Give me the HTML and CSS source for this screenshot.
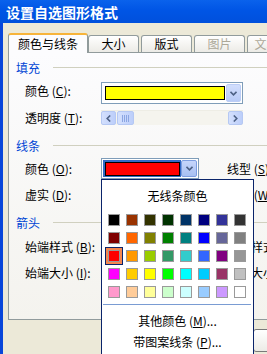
FILE: index.html
```html
<!DOCTYPE html>
<html lang="zh-CN">
<head>
    <meta charset="UTF-8">
    <title>设置自选图形格式</title>
    <link rel="stylesheet" href="styles.css">
</head>
<body>
    <div class="window">
        <div class="titlebar">设置自选图形格式</div>
        <div class="frame">
            <div class="tabs">
                <div class="tab active">颜色与线条</div>
                <div class="tab">大小</div>
                <div class="tab">版式</div>
                <div class="tab disabled">图片</div>
                <div class="tab disabled">文本框</div>
            </div>
            <div class="pane">
                <div class="section">填充</div>
                <div class="row row-fill">
                    <span class="label">颜色 (<u>C</u>):</span>
                    <div class="combo wide">
                        <span class="field"><span class="chip yellow"></span></span>
                        <span class="drop"><svg width="7" height="5" viewBox="0 0 7 5"><polyline points="0.5,0.8 3.5,3.8 6.5,0.8" fill="none" stroke="#4d6185" stroke-width="1.6"/></svg></span>
                    </div>
                </div>
                <div class="row row-alpha">
                    <span class="label">透明度 (<u>T</u>):</span>
                    <div class="scroll">
                        <span class="sbtn"><svg width="5" height="7" viewBox="0 0 5 7"><polyline points="4.2,0.5 1.2,3.5 4.2,6.5" fill="none" stroke="#4d6185" stroke-width="1.6"/></svg></span>
                        <span class="thumb"><i></i><i></i><i></i><i></i></span>
                        <span class="track"></span>
                        <span class="sbtn"><svg width="5" height="7" viewBox="0 0 5 7"><polyline points="0.8,0.5 3.8,3.5 0.8,6.5" fill="none" stroke="#4d6185" stroke-width="1.6"/></svg></span>
                    </div>
                </div>

                <div class="section section-line">线条</div>
                <div class="row grid-row row-color">
                    <span class="label">颜色 (<u>O</u>):</span>
                    <div class="combo narrow focused">
                        <span class="field"><span class="chip red"></span></span>
                        <span class="drop hot"><svg width="7" height="5" viewBox="0 0 7 5"><polyline points="0.5,0.8 3.5,3.8 6.5,0.8" fill="none" stroke="#4d6185" stroke-width="1.6"/></svg></span>
                    </div>
                    <span class="label-right">线型 (<u>S</u>):</span>
                </div>
                <div class="row grid-row row-dash">
                    <span class="label">虚实 (<u>D</u>):</span>
                    <span></span>
                    <span class="label-right">粗细 (<u>W</u>):</span>
                </div>

                <div class="section section-arrow">箭头</div>
                <div class="row grid-row row-begin">
                    <span class="label">始端样式 (<u>B</u>):</span>
                    <span></span>
                    <span class="label-right">末端样式 (<u>E</u>):</span>
                </div>
                <div class="row grid-row row-size">
                    <span class="label">始端大小 (<u>I</u>):</span>
                    <span></span>
                    <span class="label-right">末端大小 (<u>Z</u>):</span>
                </div>
            </div>
            <div class="buttons">
                <button class="btn">确定</button>
                <button class="btn">取消</button>
            </div>
        </div>

        <!-- colour dropdown opened over the line colour combo -->
        <div class="popup">
            <div class="popup-title">无线条颜色</div>
            <div class="palette">
                <span class="swatch" style="background:#000000"></span>
                <span class="swatch" style="background:#993300"></span>
                <span class="swatch" style="background:#333300"></span>
                <span class="swatch" style="background:#003300"></span>
                <span class="swatch" style="background:#003366"></span>
                <span class="swatch" style="background:#000080"></span>
                <span class="swatch" style="background:#333399"></span>
                <span class="swatch" style="background:#333333"></span>

                <span class="swatch" style="background:#800000"></span>
                <span class="swatch" style="background:#ff6600"></span>
                <span class="swatch" style="background:#808000"></span>
                <span class="swatch" style="background:#008000"></span>
                <span class="swatch" style="background:#008080"></span>
                <span class="swatch" style="background:#0000ff"></span>
                <span class="swatch" style="background:#666699"></span>
                <span class="swatch" style="background:#808080"></span>

                <span class="swatch selected" style="background:#ff0000"></span>
                <span class="swatch" style="background:#ff9900"></span>
                <span class="swatch" style="background:#99cc00"></span>
                <span class="swatch" style="background:#339966"></span>
                <span class="swatch" style="background:#33cccc"></span>
                <span class="swatch" style="background:#3366ff"></span>
                <span class="swatch" style="background:#800080"></span>
                <span class="swatch" style="background:#969696"></span>

                <span class="swatch" style="background:#ff00ff"></span>
                <span class="swatch" style="background:#ffcc00"></span>
                <span class="swatch" style="background:#ffff00"></span>
                <span class="swatch" style="background:#00ff00"></span>
                <span class="swatch" style="background:#00ffff"></span>
                <span class="swatch" style="background:#00ccff"></span>
                <span class="swatch" style="background:#993366"></span>
                <span class="swatch" style="background:#c0c0c0"></span>

                <span class="swatch" style="background:#ff99cc"></span>
                <span class="swatch" style="background:#ffcc99"></span>
                <span class="swatch" style="background:#ffff99"></span>
                <span class="swatch" style="background:#ccffcc"></span>
                <span class="swatch" style="background:#ccffff"></span>
                <span class="swatch" style="background:#99ccff"></span>
                <span class="swatch" style="background:#cc99ff"></span>
                <span class="swatch" style="background:#ffffff"></span>
            </div>
            <div class="separator"></div>
            <div class="menu-item">其他颜色 (<u>M</u>)...</div>
            <div class="menu-item">带图案线条 (<u>P</u>)...</div>
        </div>
    </div>
</body>
</html>
```

FILE: styles.css
```css
* {
    box-sizing: border-box;
}
html, body {
    margin: 0;
    height: 100%;
}
body {
    background: #ece9d8;
    font-family: "Noto Sans CJK SC", "Liberation Sans", sans-serif;
    font-size: 12px;
    color: #000;
    overflow: hidden;
}
u {
    text-decoration: underline;
}
.window {
    position: relative;
    width: 340px;
    height: 354px;
}
.titlebar {
    height: 23px;
    padding-left: 6px;
    line-height: 25px;
    font-size: 14px;
    font-weight: bold;
    color: #fff;
    background: linear-gradient(#0a62ec, #0055e5 45%, #0050dc);
    white-space: nowrap;
}
.frame {
    height: 331px;
    padding: 10px 0 0 5px;
    border-left: 3px solid #0846da;
    background: #ece9d8;
}

/* tabs */
.tabs {
    display: flex;
    align-items: flex-end;
    height: 19px;
}
.tab {
    height: 17px;
    width: 51px;
    margin-right: 2px;
    padding-bottom: 1px;
    text-align: center;
    line-height: 15px;
    border: 1px solid #919b9c;
    border-bottom: none;
    border-radius: 3px 3px 0 0;
    background: linear-gradient(#ffffff, #ecebe6);
    white-space: nowrap;
    overflow: hidden;
}
.tab.active {
    position: relative;
    z-index: 1;
    width: 80px;
    height: 20px;
    margin-bottom: -1px;
    margin-right: 0;
    line-height: 17px;
    border-top: 2px solid #f7b43a;
    background: #fcfcfe;
}
.tab.disabled {
    color: #aca899;
}

/* tab page */
.pane {
    width: 320px;
    height: 268px;
    padding: 6px 8px 0 7px;
    border: 1px solid #919b9c;
    background: linear-gradient(#fcfcfe, #f4f3ee);
}
.section {
    display: flex;
    align-items: center;
    gap: 13px;
    height: 17px;
    color: #0046d5;
}
.section::after {
    content: "";
    flex: 1;
    height: 1px;
    background: #d0d0bf;
}
.section-line {
    margin-top: 12px;
}
.section-arrow {
    margin-top: 10px;
}
.row {
    display: flex;
    align-items: center;
    padding-left: 9px;
    white-space: nowrap;
}
.grid-row {
    display: grid;
    grid-template-columns: 76px 126px auto;
    align-items: center;
}
.label {
    width: 76px;
}
.row-fill {
    margin-top: 6px;
    height: 22px;
}
.row-fill .label {
    margin-bottom: 5px;
}
.row-alpha {
    margin-top: 6px;
    height: 15px;
}
.row-color {
    margin-top: 4px;
    height: 21px;
    grid-template-columns: 76px 98px auto;
}
.row-dash {
    margin-top: 5px;
    height: 20px;
}
.row-begin {
    margin-top: 5px;
    height: 20px;
}
.row-size {
    margin-top: 6px;
    height: 20px;
}

/* combo boxes */
.combo {
    display: flex;
    height: 100%;
    padding: 1px;
    border: 1px solid #7f9db9;
    background: #fff;
}
.combo.wide {
    width: 142px;
}
.combo.narrow {
    width: 98px;
}
.field {
    flex: 1;
    display: flex;
    align-items: center;
    padding: 0 1px 0 2px;
}
.combo.focused .field {
    background: #316ac5;
}
.chip {
    flex: 1;
    height: 14px;
    border: 1px solid #000;
}
.chip.yellow { background: #ffff00; }
.chip.red { background: #ff0000; }
.drop {
    display: flex;
    align-items: center;
    justify-content: center;
    width: 15px;
    border: 1px solid #bccdf6;
    border-radius: 2px;
    background: linear-gradient(#d2defd, #b8cbf7);
}
.drop.hot {
    width: 16px;
    border-color: #7d9ee0;
    background: linear-gradient(#c6d6fb, #a8c0f2);
}

/* scroll bar */
.scroll {
    display: flex;
    width: 142px;
    height: 15px;
    background: #f5f4ee;
    border-top: 1px solid #eeede5;
}
.sbtn, .thumb {
    display: flex;
    align-items: center;
    justify-content: center;
    border: 1px solid #b5c8f3;
    border-radius: 2px;
    background: linear-gradient(90deg, #d4e0fd, #bccefa);
}
.sbtn {
    width: 15px;
}
.thumb {
    width: 17px;
    margin-left: 1px;
    gap: 1px;
}
.thumb i {
    width: 1px;
    height: 7px;
    background: #8ba6e2;
}
.track {
    flex: 1;
}
.row-color .label-right {
    margin-left: 28px;
}

/* bottom buttons */
.buttons {
    display: flex;
    gap: 6px;
    margin-top: 9px;
    padding-left: 245px;
}
.btn {
    flex: none;
    width: 75px;
    height: 23px;
    font-family: inherit;
    font-size: 12px;
    border: 1px solid #7a7a7a;
    border-radius: 3px;
    background: linear-gradient(#ffffff, #ecebe6);
}

/* colour popup */
.popup {
    position: absolute;
    left: 101px;
    top: 179px;
    z-index: 2;
    width: 153px;
    height: 190px;
    border: 1px solid #0a246a;
    background: #fff;
}
.popup-title {
    height: 34px;
    line-height: 32px;
    text-align: center;
}
.palette {
    display: grid;
    grid-template-columns: repeat(8, 12px);
    gap: 6px;
    padding-left: 6px;
}
.swatch {
    width: 12px;
    height: 12px;
    border: 1px solid #9a9a9a;
}
.swatch.selected {
    box-shadow: 0 0 0 2px #f4874f, 0 0 0 3px #0a246a;
}
.separator {
    height: 1px;
    margin: 6px 2px 0 1px;
    background: #7a9cd3;
}
.menu-item {
    height: 21px;
    line-height: 21px;
    text-align: center;
}
.separator + .menu-item {
    margin-top: 5px;
}
```
